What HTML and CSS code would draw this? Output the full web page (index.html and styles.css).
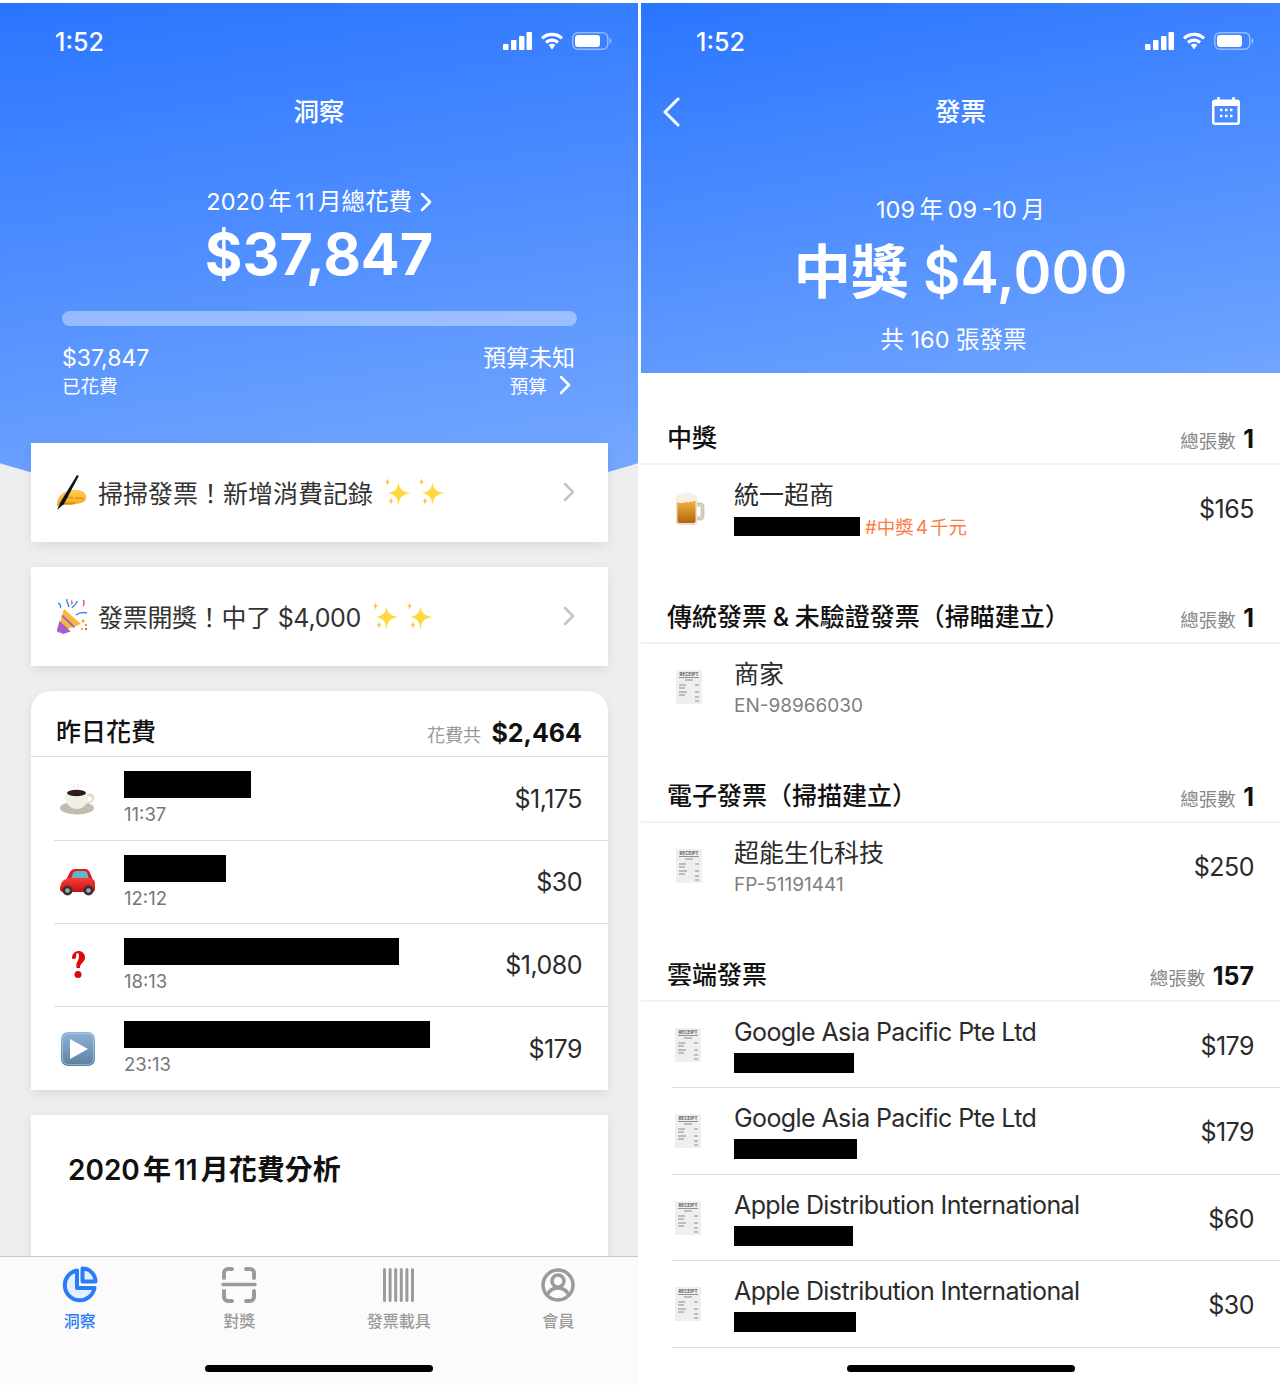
FILE: index.html
```html
<!DOCTYPE html>
<html lang="zh-Hant">
<head>
    <meta charset="UTF-8">
    <title>發票</title>
    <link rel="stylesheet" href="styles.css">
</head>
<body>
    <svg class="sprites" aria-hidden="true">
        <defs>
            <linearGradient id="beerFill" x1="0" y1="0" x2="0" y2="1"><stop offset="0" stop-color="#f3b13c"/><stop offset="1" stop-color="#b5640f"/></linearGradient>
            <linearGradient id="playFill" x1="0" y1="0" x2="0" y2="1"><stop offset="0" stop-color="#8db4d8"/><stop offset="1" stop-color="#5b7f9f"/></linearGradient>
            <linearGradient id="carFill" x1="0" y1="0" x2="0" y2="1"><stop offset="0" stop-color="#f5403a"/><stop offset="1" stop-color="#c80f12"/></linearGradient>
            <linearGradient id="handFill" x1="0" y1="0" x2="0" y2="1"><stop offset="0" stop-color="#ffd050"/><stop offset="1" stop-color="#f5a623"/></linearGradient>
        </defs>
        <symbol id="signal" viewBox="0 0 29 18"><rect x="0" y="12" width="5.500" height="6" rx="1"/><rect x="8" y="8" width="5.500" height="10" rx="1"/><rect x="16" y="4" width="5.500" height="14" rx="1"/><rect x="23.500" y="0" width="5.500" height="18" rx="1"/></symbol>
        <symbol id="wifi" viewBox="0 0 24 18"><path d="M2 6.300a14.500 14.500 0 0 1 20 0M6 10.500a8.700 8.700 0 0 1 12 0" fill="none" stroke="#fff" stroke-width="3.200"/><path d="M12 11.800c-1.300 0-2.400.5-3.200 1.300l3.200 4.400 3.200-4.400c-.8-.8-1.900-1.300-3.200-1.300z" fill="#fff"/></symbol>
        <symbol id="battery" viewBox="0 0 40 18"><rect x=".75" y=".75" width="35" height="16.500" rx="5" fill="none" stroke="#fff" stroke-opacity=".45" stroke-width="1.500"/><rect x="3" y="3" width="25" height="12" rx="3" fill="#fff"/><path d="M37.500 6c1.300.5 2 1.700 2 3s-.7 2.500-2 3z" fill="#fff" fill-opacity=".45"/></symbol>
        <symbol id="writing" viewBox="0 0 32 36"><path d="M1 32c0-7 3-12 8-14l7-2c5-1 13 0 14 6 .5 4-1 6-5 7l-10 2H4z" fill="url(#handFill)"/><path d="M8 26c3-3 6-3 9-2m2 0c3 0 6 0 9 1M7 30c4-1 9-1 12-1" stroke="#c97f12" fill="none" stroke-width="1"/><path d="M1 36l3.500-8L21 1l1.800 1L8 30z" fill="#111"/></symbol>
        <symbol id="popper" viewBox="0 0 32 36"><path d="M1 35 8 11l17 15z" fill="#f5b83a"/><path d="M1.800 32.500 4 24.500l9 8.500-6 2zM6 17.500l12.500 11.800" fill="#a55ccf" stroke="#a55ccf" stroke-width="1.800"/><path d="M2 5c3 1 3 4 2 5M11 1c-1 3 1 4 2 8M21 3c0 4-3 3-5 7M20 17c4-3 7-3 11-2" fill="none" stroke-width="1.500" stroke="#3c8cf0"/><path d="M27 2c3 2-1 4 1 6M15 3c2 1 1 3 0 3" fill="none" stroke-width="1.500" stroke="#e8567a"/><circle cx="27" cy="23" r="1.500" fill="#f1a02c"/><circle cx="30" cy="31" r="1.200" fill="#e8567a"/><circle cx="26" cy="31" r="1.200" fill="#f5b83a"/><circle cx="30" cy="27" r="1" fill="#e8567a"/></symbol>
        <symbol id="sparkles" viewBox="0 0 27 28"><path d="M14.500 4c1 7 3 9.500 12.500 11-9.500 1.500-11.500 4-12.500 13-1-9-3-11.500-11-13 8-1.500 10-4 11-11z" fill="#ffd93f"/><path d="M3.500 0c.4 3 1 3.600 3 4-2 .4-2.600 1-3 4-.4-3-1-3.600-3-4 2-.4 2.600-1 3-4zM7 19c.4 3 1 3.600 3 4-2 .4-2.600 1-3 4-.4-3-1-3.600-3-4 2-.4 2.600-1 3-4z" fill="#fcc336"/></symbol>
        <symbol id="beer" viewBox="0 0 30 34"><path d="M20 11h6c2.500 0 3 2 3 4v9c0 2-1 4-3 4h-6v-3h4c1 0 2-1 2-2v-7c0-1-1-2-2-2h-4z" fill="#d8d2c4" stroke="#a49c8a" stroke-width=".5"/><path d="M1 7h21v23c0 2-1 3-3 3H4c-2 0-3-1-3-3z" fill="#e4e0d4"/><path d="M2.500 9h18v20c0 1-1 2-2 2H4.500c-1 0-2-1-2-2z" fill="url(#beerFill)"/><path d="M1 9C0 5 3 2 6 2c2-2 9-2 11 0 3 0 6 2 5 6-2 2-3 0-5 2-2-1-3 1-6 0-3 1-7 2-10-1z" fill="#f6efe2"/></symbol>
        <symbol id="receipt" viewBox="0 0 26 34"><rect x="0" y="0" width="26" height="34" fill="#efefef"/><path d="M3 7.500h20" stroke="#777" stroke-width=".8"/><path d="M9 10h8M3 15h7M19 15h4M3 18h6M3 22h8M19 22h4M3 25h6M19 27h4M19 31h4" stroke="#8a8a8a" stroke-width="1"/></symbol>
        <symbol id="coffee" viewBox="0 0 36 32"><ellipse cx="17" cy="25" rx="17" ry="6.500" fill="#bfbcb0"/><path d="M5 9h23v6c0 6-5 11-11 11S5 21 5 15z" fill="#f1efe7"/><path d="M27 11c5-1 8 1 7 5-1 3-4 5-8 5l1-2c3 0 5-2 5-3 0-2-2-3-5-3z" fill="#dedbce"/><ellipse cx="16.500" cy="9.500" rx="11.500" ry="4.500" fill="#fff"/><ellipse cx="16.500" cy="10" rx="9.500" ry="3.300" fill="#2e1c12"/><path d="M14 5c-1-1 1-2 0-3M18 5c-1-1 1-2 0-4" stroke="#ddd" fill="none"/></symbol>
        <symbol id="car" viewBox="0 0 36 28"><path d="M10 4c1-2 3-3 6-3h9c3 0 4 2 5 4l3 7H6z" fill="#e01a1a"/><path d="M13 5c.5-1 2-2 3-2h8c2 0 3 1 3.500 2.500L29 11H11z" fill="#62b6c6"/><path d="M2 14c2-3 6-4 10-4h14c5 0 9 1 9 5v6c0 2-1 3-3 3H3c-2 0-3-1-3-3 0-3 1-5 2-7z" fill="url(#carFill)"/><circle cx="7.500" cy="22.500" r="5" fill="#333"/><circle cx="7.500" cy="22.500" r="2.300" fill="#aaa"/><circle cx="28.500" cy="22.500" r="5" fill="#333"/><circle cx="28.500" cy="22.500" r="2.300" fill="#aaa"/></symbol>
        <symbol id="question" viewBox="0 0 14 28"><path d="M1 7C1 3 4 0 7.500 0 11 0 14 2.500 14 6.500c0 3-1.800 4.500-3.300 6-1.200 1.200-1.700 2.200-1.700 4.500H5.500c-.5-3 0-5 1.200-7 .8-1.500 1.300-3 1.300-4.500C8 3.500 7.500 2 6.500 2 5.500 2 5 3.200 5.200 4.500 5.500 6.500 4.500 8 3 8 2 8 1 7.800 1 7z" fill="#dc0a0a"/><circle cx="7" cy="23.500" r="3.500" fill="#dc0a0a"/></symbol>
        <symbol id="play" viewBox="0 0 34 34"><rect width="34" height="34" rx="7" fill="url(#playFill)"/><rect x="1.500" y="1.500" width="31" height="31" rx="6" fill="none" stroke="#b9d2e6" stroke-opacity=".6"/><path d="M9 7l18 10L9 27z" fill="#fff"/></symbol>
    </svg>

    <div class="screens">
        <!-- 洞察 -->
        <main class="phone phone-insight">
            <div class="scroll">
                <header class="hero">
                    <div class="status">
                        <span class="status-time">1:52</span>
                        <span class="status-icons">
                            <svg class="ic-signal"><use href="#signal"/></svg>
                            <svg class="ic-wifi"><use href="#wifi"/></svg>
                            <svg class="ic-battery"><use href="#battery"/></svg>
                        </span>
                    </div>
                    <div class="nav"><span class="nav-title">洞察</span></div>
                    <div class="hero-label">2020 年 11 月總花費
                        <svg class="chev-white" viewBox="0 0 12 20"><path d="M2 2l8 8-8 8"/></svg>
                    </div>
                    <div class="hero-amount">$37,847</div>
                    <div class="budget-bar"></div>
                    <div class="budget-row">
                        <div>
                            <div class="budget-main">$37,847</div>
                            <div class="budget-sub">已花費</div>
                        </div>
                        <div class="budget-right">
                            <div class="budget-main">預算未知</div>
                            <div class="budget-sub">預算
                                <svg class="chev-white" viewBox="0 0 12 20"><path d="M2 2l8 8-8 8"/></svg>
                            </div>
                        </div>
                    </div>
                </header>

                <a class="promo">
                    <svg class="promo-emoji"><use href="#writing"/></svg>
                    <span class="promo-text">掃掃發票！新增消費記錄</span>
                    <svg class="sparkle"><use href="#sparkles"/></svg>
                    <svg class="sparkle"><use href="#sparkles"/></svg>
                    <svg class="chev-grey" viewBox="0 0 12 20"><path d="M2 2l8 8-8 8"/></svg>
                </a>
                <a class="promo">
                    <svg class="promo-emoji"><use href="#popper"/></svg>
                    <span class="promo-text promo-text-tight">發票開獎！中了 $4,000</span>
                    <svg class="sparkle"><use href="#sparkles"/></svg>
                    <svg class="sparkle"><use href="#sparkles"/></svg>
                    <svg class="chev-grey" viewBox="0 0 12 20"><path d="M2 2l8 8-8 8"/></svg>
                </a>

                <section class="spend-card">
                    <div class="spend-head">
                        <span class="spend-title">昨日花費</span>
                        <span class="spend-total"><small>花費共</small> <b>$2,464</b></span>
                    </div>
                    <div class="spend-row">
                        <span class="spend-icon"><svg class="em-coffee"><use href="#coffee"/></svg></span>
                        <div class="spend-info">
                            <div class="redact r-127"></div>
                            <div class="spend-time">11:37</div>
                        </div>
                        <span class="money">$1,175</span>
                    </div>
                    <div class="spend-row">
                        <span class="spend-icon"><svg class="em-car"><use href="#car"/></svg></span>
                        <div class="spend-info">
                            <div class="redact r-102"></div>
                            <div class="spend-time">12:12</div>
                        </div>
                        <span class="money">$30</span>
                    </div>
                    <div class="spend-row">
                        <span class="spend-icon"><svg class="em-question"><use href="#question"/></svg></span>
                        <div class="spend-info">
                            <div class="redact r-275"></div>
                            <div class="spend-time">18:13</div>
                        </div>
                        <span class="money">$1,080</span>
                    </div>
                    <div class="spend-row">
                        <span class="spend-icon"><svg class="em-play"><use href="#play"/></svg></span>
                        <div class="spend-info">
                            <div class="redact r-306"></div>
                            <div class="spend-time">23:13</div>
                        </div>
                        <span class="money">$179</span>
                    </div>
                </section>

                <section class="analysis-card">
                    <h2>2020 年 11 月花費分析</h2>
                </section>
            </div>

            <nav class="tabbar">
                <div class="tab tab-active">
                    <svg class="tab-icon" viewBox="0 0 36 38">
                        <path d="M15 4.500A15 15 0 1 0 32.500 22H15z" fill="#e3f0ff" stroke="#2a7cf6" stroke-width="4" stroke-linejoin="round"/>
                        <path d="M20.500 2.500A13 13 0 0 1 33.500 15.500H20.500z" fill="#e3f0ff" stroke="#2a7cf6" stroke-width="4" stroke-linejoin="round"/>
                    </svg>
                    <span>洞察</span>
                </div>
                <div class="tab">
                    <svg class="tab-icon" viewBox="0 0 36 38">
                        <path d="M11 3H7a4 4 0 0 0-4 4v5M25 3h4a4 4 0 0 1 4 4v5M11 35H7a4 4 0 0 1-4-4v-6M25 35h4a4 4 0 0 0 4-4v-6" fill="none" stroke="#9b9b9b" stroke-width="4" stroke-linecap="round"/>
                        <path d="M2 18.500h32" stroke="#9b9b9b" stroke-width="3.500" stroke-linecap="round"/>
                    </svg>
                    <span>對獎</span>
                </div>
                <div class="tab">
                    <svg class="tab-icon" viewBox="0 0 36 38">
                        <path d="M3.500 3.500v31M9.100 3.500v31M14.700 3.500v31M20.300 3.500v31M25.900 3.500v31M31.500 3.500v31" stroke="#9b9b9b" stroke-width="3" stroke-linecap="round"/>
                    </svg>
                    <span>發票載具</span>
                </div>
                <div class="tab">
                    <svg class="tab-icon" viewBox="0 0 36 38">
                        <circle cx="18" cy="19" r="15" fill="none" stroke="#9b9b9b" stroke-width="3.500"/>
                        <circle cx="18" cy="15" r="6" fill="none" stroke="#9b9b9b" stroke-width="3.500"/>
                        <path d="M7 30c2-6 6-8 11-8s9 2 11 8" fill="none" stroke="#9b9b9b" stroke-width="3.500"/>
                    </svg>
                    <span>會員</span>
                </div>
                <div class="home-bar"></div>
            </nav>
        </main>

        <!-- 發票 -->
        <main class="phone phone-invoice">
            <header class="inv-hero">
                <div class="status">
                    <span class="status-time">1:52</span>
                    <span class="status-icons">
                        <svg class="ic-signal"><use href="#signal"/></svg>
                        <svg class="ic-wifi"><use href="#wifi"/></svg>
                        <svg class="ic-battery"><use href="#battery"/></svg>
                    </span>
                </div>
                <div class="nav">
                    <svg class="nav-back" viewBox="0 0 18 30"><path d="M16 2L3 15l13 13"/></svg>
                    <span class="nav-title">發票</span>
                    <svg class="nav-cal" viewBox="0 0 28 28">
                        <path d="M3 2.500h22a3 3 0 0 1 3 3V25a3 3 0 0 1-3 3H3a3 3 0 0 1-3-3V5.500a3 3 0 0 1 3-3zM2.500 9v15.500c0 .6.400 1 1 1h21c.6 0 1-.4 1-1V9z" fill="#fff" fill-rule="evenodd"/>
                        <path d="M6.500 0v4M21.500 0v4" stroke="#fff" stroke-width="2.500" stroke-linecap="round"/>
                        <path d="M8 13h2.500M13 13h2.500M18 13h2.500M8 19h2.500M13 19h2.500M18 19h2.500" stroke="#fff" stroke-width="2.500"/>
                    </svg>
                </div>
                <div class="inv-period">109 年 09 -10 月</div>
                <div class="inv-prize">中獎 $4,000</div>
                <div class="inv-count">共 160 張發票</div>
            </header>

            <section class="inv-section">
                <div class="inv-head">
                    <span class="inv-title">中獎</span>
                    <span class="inv-total"><small>總張數</small> <b>1</b></span>
                </div>
                <div class="inv-row">
                    <svg class="em-beer"><use href="#beer"/></svg>
                    <div class="inv-info">
                        <div class="inv-name">統一超商</div>
                        <div class="inv-sub"><div class="redact r-126"></div><span class="inv-tag">#中獎 4 千元</span></div>
                    </div>
                    <span class="money">$165</span>
                </div>
            </section>

            <section class="inv-section">
                <div class="inv-head">
                    <span class="inv-title">傳統發票 &amp; 未驗證發票（掃瞄建立）</span>
                    <span class="inv-total"><small>總張數</small> <b>1</b></span>
                </div>
                <div class="inv-row">
                    <svg class="em-receipt" viewBox="0 0 26 34"><use href="#receipt"/><text x="13" y="6" class="receipt-word">RECEIPT</text></svg>
                    <div class="inv-info">
                        <div class="inv-name">商家</div>
                        <div class="inv-sub inv-code">EN-98966030</div>
                    </div>
                </div>
            </section>

            <section class="inv-section">
                <div class="inv-head">
                    <span class="inv-title">電子發票（掃描建立）</span>
                    <span class="inv-total"><small>總張數</small> <b>1</b></span>
                </div>
                <div class="inv-row">
                    <svg class="em-receipt" viewBox="0 0 26 34"><use href="#receipt"/><text x="13" y="6" class="receipt-word">RECEIPT</text></svg>
                    <div class="inv-info">
                        <div class="inv-name">超能生化科技</div>
                        <div class="inv-sub inv-code">FP-51191441</div>
                    </div>
                    <span class="money">$250</span>
                </div>
            </section>

            <section class="inv-section">
                <div class="inv-head">
                    <span class="inv-title">雲端發票</span>
                    <span class="inv-total"><small>總張數</small> <b>157</b></span>
                </div>
                <div class="inv-row inv-row-line">
                    <svg class="em-receipt" viewBox="0 0 26 34"><use href="#receipt"/><text x="13" y="6" class="receipt-word">RECEIPT</text></svg>
                    <div class="inv-info">
                        <div class="inv-name inv-name-en">Google Asia Pacific Pte Ltd</div>
                        <div class="inv-sub"><div class="redact r-120"></div></div>
                    </div>
                    <span class="money">$179</span>
                </div>
                <div class="inv-row inv-row-line">
                    <svg class="em-receipt" viewBox="0 0 26 34"><use href="#receipt"/><text x="13" y="6" class="receipt-word">RECEIPT</text></svg>
                    <div class="inv-info">
                        <div class="inv-name inv-name-en">Google Asia Pacific Pte Ltd</div>
                        <div class="inv-sub"><div class="redact r-123"></div></div>
                    </div>
                    <span class="money">$179</span>
                </div>
                <div class="inv-row inv-row-line">
                    <svg class="em-receipt" viewBox="0 0 26 34"><use href="#receipt"/><text x="13" y="6" class="receipt-word">RECEIPT</text></svg>
                    <div class="inv-info">
                        <div class="inv-name inv-name-en">Apple Distribution International</div>
                        <div class="inv-sub"><div class="redact r-119"></div></div>
                    </div>
                    <span class="money">$60</span>
                </div>
                <div class="inv-row inv-row-line">
                    <svg class="em-receipt" viewBox="0 0 26 34"><use href="#receipt"/><text x="13" y="6" class="receipt-word">RECEIPT</text></svg>
                    <div class="inv-info">
                        <div class="inv-name inv-name-en">Apple Distribution International</div>
                        <div class="inv-sub"><div class="redact r-122"></div></div>
                    </div>
                    <span class="money">$30</span>
                </div>
            </section>
            <div class="home-bar"></div>
        </main>
    </div>
</body>
</html>
```

FILE: styles.css
```css
* {
    box-sizing: border-box;
}
body {
    margin: 0;
    background: #fff;
    font-family: Inter, "Noto Sans CJK TC", sans-serif;
    color: #2b2b2b;
}
.sprites {
    position: absolute;
    width: 0;
    height: 0;
}
.receipt-word {
    font-size: 4.500px;
    font-weight: 700;
    text-anchor: middle;
    fill: #555;
}
.screens {
    display: flex;
    justify-content: space-between;
    padding-top: 3px;
}
.phone {
    position: relative;
    height: 1382px;
    overflow: hidden;
}

/* status + nav */
.status {
    height: 76px;
    display: flex;
    justify-content: space-between;
    align-items: center;
    padding: 0 26px 0 55px;
    color: #fff;
}
.status-time {
    padding-top: 2px;
    font-size: 25px;
    font-weight: 500;
}
.status-icons {
    display: flex;
    align-items: center;
    gap: 8px;
    fill: #fff;
}
.ic-signal {
    width: 29px;
    height: 18px;
}
.ic-wifi {
    width: 24px;
    height: 18px;
}
.ic-battery {
    width: 40px;
    height: 18px;
}
.nav {
    position: relative;
    height: 64px;
    padding-bottom: 4px;
    display: flex;
    justify-content: center;
    align-items: center;
    color: #fff;
}
.nav-title {
    font-size: 25.500px;
    font-weight: 500;
}
.nav-back {
    position: absolute;
    left: 21px;
    top: 18px;
    width: 18px;
    height: 30px;
    fill: none;
    stroke: #fff;
    stroke-width: 3;
    stroke-linecap: round;
    stroke-linejoin: round;
}
.nav-cal {
    position: absolute;
    right: 40px;
    top: 18px;
    width: 28px;
    height: 28px;
}
.chev-white {
    width: 12px;
    height: 20px;
    margin-left: 4px;
    vertical-align: -2px;
    fill: none;
    stroke: #fff;
    stroke-width: 2.500;
    stroke-linecap: round;
    stroke-linejoin: round;
}

/* left screen */
.phone-insight {
    width: 638px;
    display: flex;
    flex-direction: column;
    background: #eeeeee;
}
.scroll {
    flex: 1;
    overflow: hidden;
    min-height: 0;
}
.hero {
    position: relative;
    z-index: 0;
    height: 440px;
    color: #fff;
}
.hero::before {
    content: "";
    position: absolute;
    z-index: -1;
    left: 0;
    top: 0;
    width: 100%;
    height: 507px;
    background: linear-gradient(172deg, #2a75ff 0%, #7aabff 100%);
    clip-path: ellipse(760px 507px at 50% 0);
}
.hero-label {
    margin-top: 44px;
    height: 30px;
    line-height: 30px;
    text-align: center;
    font-size: 23.500px;
    word-spacing: -3px;
    color: #fff;
}
.hero-amount {
    margin-top: 2px;
    height: 70px;
    line-height: 70px;
    text-align: center;
    font-size: 57.500px;
    font-weight: 700;
}
.budget-bar {
    margin: 22px 0 0 62px;
    width: 515px;
    height: 15px;
    border-radius: 8px;
    background: rgba(255, 255, 255, 0.38);
}
.budget-row {
    display: flex;
    justify-content: space-between;
    margin-top: 17px;
    padding: 0 63px 0 62px;
}
.budget-right {
    text-align: right;
}
.budget-right .chev-white {
    margin: 0 4px 0 7px;
}
.budget-main {
    height: 30px;
    line-height: 30px;
    font-size: 23px;
}
.budget-sub {
    height: 26px;
    line-height: 26px;
    font-size: 18.500px;
}
.promo {
    position: relative;
    display: flex;
    align-items: center;
    width: 577px;
    height: 99px;
    margin: 0 0 25px 31px;
    padding: 0 33px 2px 25px;
    background: #fff;
    box-shadow: 0 4px 12px rgba(0, 0, 0, 0.08);
}
.promo-emoji {
    width: 32px;
    height: 36px;
    flex: none;
    margin-right: 10px;
}
.promo-text {
    font-size: 25px;
    color: #333;
}
.promo-text-tight {
    letter-spacing: -0.300px;
}
.sparkle {
    width: 27px;
    height: 28px;
    margin-left: 7px;
    flex: none;
}
.promo-text + .sparkle {
    margin-left: 11px;
}
.chev-grey {
    width: 12px;
    height: 20px;
    margin-left: auto;
    fill: none;
    stroke: #c4c4c4;
    stroke-width: 2.500;
    stroke-linecap: round;
    stroke-linejoin: round;
}
.spend-card {
    width: 577px;
    margin: 0 0 25px 31px;
    background: #fff;
    border-radius: 20px 20px 0 0;
    box-shadow: 0 4px 12px rgba(0, 0, 0, 0.08);
}
.spend-head {
    display: flex;
    justify-content: space-between;
    align-items: flex-end;
    height: 66px;
    padding: 0 26px 8px 25px;
    border-bottom: 1px solid #ddd;
}
.spend-title {
    font-size: 25px;
    font-weight: 500;
    color: #111;
}
.spend-total small {
    font-size: 18px;
    color: #999;
    margin-right: 6px;
}
.spend-total b {
    font-size: 25px;
    font-weight: 700;
    color: #111;
}
.spend-row {
    display: flex;
    align-items: center;
    height: 83px;
    margin-left: 23px;
    padding-right: 26px;
    border-top: 1px solid #ddd;
}
.spend-row:nth-child(2) {
    border-top: 0;
}
.spend-row:last-child {
    height: 84px;
}
.spend-icon {
    width: 48px;
    margin-right: 22px;
    display: flex;
    justify-content: center;
}
.em-coffee {
    width: 36px;
    height: 32px;
}
.em-car {
    width: 36px;
    height: 28px;
}
.em-question {
    width: 14px;
    height: 28px;
}
.em-play {
    width: 34px;
    height: 34px;
}
.spend-info {
    flex: 1;
}
.spend-time {
    margin-top: 4px;
    font-size: 18.500px;
    line-height: 24px;
    color: #777;
}
.money {
    font-size: 25px;
    letter-spacing: -0.500px;
    color: #2b2b2b;
}
.redact {
    background: #000;
    height: 27px;
}
.r-127 { width: 127px; }
.r-102 { width: 102px; }
.r-275 { width: 275px; }
.r-306 { width: 306px; }
.r-126 { width: 126px; height: 19px; }
.r-120 { width: 120px; height: 20px; }
.r-123 { width: 123px; height: 20px; }
.r-119 { width: 119px; height: 20px; }
.r-122 { width: 122px; height: 20px; }
.analysis-card {
    width: 577px;
    height: 300px;
    margin-left: 31px;
    padding: 35px 37px;
    background: #fff;
    box-shadow: 0 4px 12px rgba(0, 0, 0, 0.08);
}
.analysis-card h2 {
    margin: 0;
    font-size: 28px;
    line-height: 40px;
    font-weight: 600;
    word-spacing: -4px;
    color: #111;
}
.tabbar {
    position: relative;
    height: 129px;
    flex: none;
    display: flex;
    align-items: flex-start;
    padding-top: 9px;
    background: #fbfbfb;
    border-top: 1px solid #c8c8c8;
}
.tab {
    flex: 1;
    display: flex;
    flex-direction: column;
    align-items: center;
    font-size: 16px;
    font-weight: 500;
    line-height: 22px;
    color: #9b9b9b;
}
.tab-active {
    color: #2a7cf6;
}
.tab-icon {
    width: 36px;
    height: 38px;
    margin-bottom: 6px;
}
.home-bar {
    position: absolute;
    bottom: 13px;
    left: 205px;
    width: 228px;
    height: 7px;
    border-radius: 4px;
    background: #000;
}

/* right screen */
.phone-invoice {
    width: 639px;
    background: #fff;
}
.phone-invoice .home-bar {
    left: 206px;
}
.inv-hero {
    height: 370px;
    color: #fff;
    text-align: center;
    background: linear-gradient(170deg, #2a75ff 0%, #70a5ff 100%);
}
.inv-period {
    margin-top: 52px;
    height: 30px;
    line-height: 30px;
    font-size: 23.500px;
    word-spacing: -2px;
}
.inv-prize {
    margin-top: 8px;
    height: 78px;
    line-height: 78px;
    font-size: 57.500px;
    font-weight: 600;
}
.inv-count {
    margin-top: 13px;
    padding-right: 14px;
    height: 32px;
    line-height: 32px;
    font-size: 23.500px;
}
.inv-head {
    display: flex;
    justify-content: space-between;
    align-items: flex-end;
    height: 92px;
    padding: 0 26px 9px;
    border-bottom: 2px solid #f2f2f6;
}
.inv-title {
    margin-bottom: -2px;
    font-size: 25px;
    line-height: 36px;
    font-weight: 500;
    word-spacing: -1px;
    color: #111;
}
.inv-total small {
    font-size: 18.500px;
    color: #888;
    margin-right: 3px;
}
.inv-total b {
    font-size: 25px;
    font-weight: 700;
    color: #111;
}
.inv-row {
    display: flex;
    align-items: flex-start;
    height: 87px;
    padding-right: 26px;
}
.inv-row-line {
    height: 86.400px;
    margin-left: 31px;
    border-bottom: 1px solid #ddd;
}
.em-beer {
    width: 30px;
    height: 34px;
    margin: 27px 0 0 34px;
    flex: none;
}
.em-receipt {
    width: 26px;
    height: 34px;
    margin: 26px 0 0 35px;
    flex: none;
}
.inv-row-line .em-receipt {
    margin-left: 3px;
}
.inv-info {
    flex: 1;
    margin-left: 33px;
    padding-top: 12px;
}
.em-beer + .inv-info {
    margin-left: 29px;
}
.inv-row:not(.inv-row-line) .em-receipt + .inv-info {
    margin-left: 32px;
}
.inv-name {
    height: 36px;
    line-height: 36px;
    font-size: 25px;
    color: #2b2b2b;
}
.inv-name-en {
    letter-spacing: -0.600px;
}
.inv-sub {
    display: flex;
    align-items: center;
    height: 26px;
    margin-top: 0;
    font-size: 19px;
}
.inv-code {
    color: #808080;
}
.inv-tag {
    margin-left: 5px;
    font-size: 18.500px;
    word-spacing: -3px;
    color: #ff7b45;
}
.inv-row .money {
    margin-top: 29px;
}
```
